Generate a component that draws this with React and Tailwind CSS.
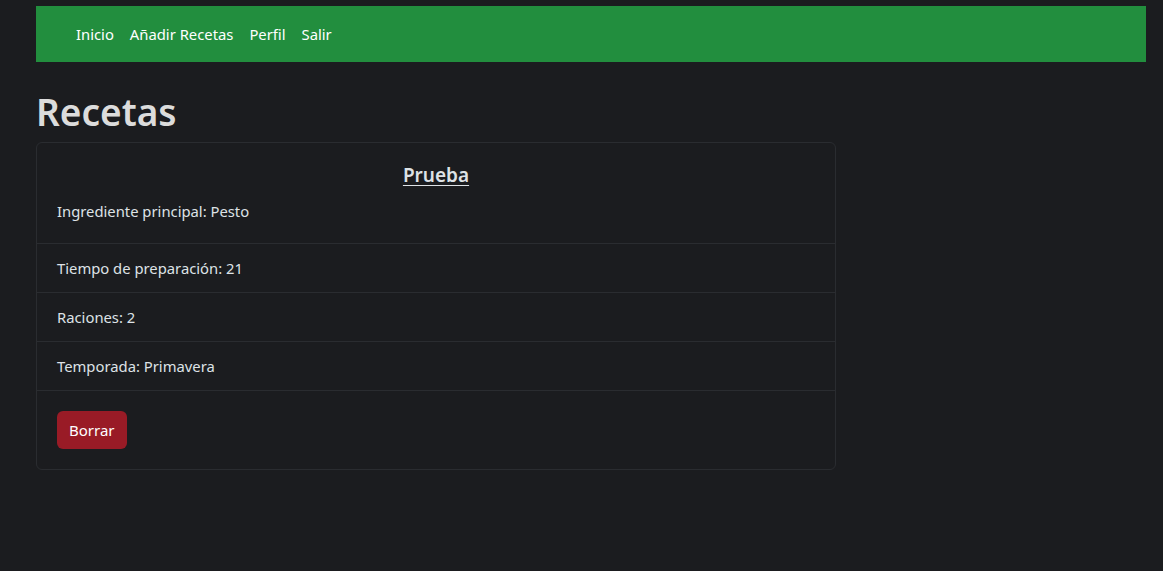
import React from "react";

const items = [
  "Tiempo de preparación: 21",
  "Raciones: 2",
  "Temporada: Primavera",
];

const App = () => {
  return (
    <div
      className="min-h-screen bg-[#1b1c1f] pt-[6px] text-[#dee2e6]"
      style={{ fontFamily: '"Noto Sans", "Open Sans", sans-serif' }}
    >
      {/* navbar */}
      <nav className="ml-[36px] w-[1110px] h-[56px] bg-[#228e3e] flex items-center pl-[32px]">
        <ul className="flex items-center text-[14.8px] text-white">
          <li className="px-2">Inicio</li>
          <li className="px-2">Añadir Recetas</li>
          <li className="px-2">Perfil</li>
          <li className="px-2">Salir</li>
        </ul>
      </nav>

      <div className="ml-[36px] w-[800px]">
        <h1 className="mt-[26px] mb-[7px] text-[37px] leading-[47px] font-semibold text-[#dcdcdc]">
          Recetas
        </h1>

        {/* card */}
        <div className="border border-[#2a2c30] rounded-md text-[14.8px]">
          <div className="p-5">
            <h5 className="text-center text-[19px] leading-6 font-semibold underline underline-offset-[3px] mb-3">
              Prueba
            </h5>
            <p className="leading-6">Ingrediente principal: Pesto</p>
          </div>
          <ul>
            {items.map((item, index) => (
              <li
                key={index}
                className="border-t border-[#2a2c30] px-5 py-3 leading-6"
              >
                {item}
              </li>
            ))}
          </ul>
          <div className="border-t border-[#2a2c30] p-5">
            <button className="h-[38px] px-3 rounded-md bg-[#991b26] text-white text-[15px]">
              Borrar
            </button>
          </div>
        </div>
      </div>
    </div>
  );
};

export default App;
